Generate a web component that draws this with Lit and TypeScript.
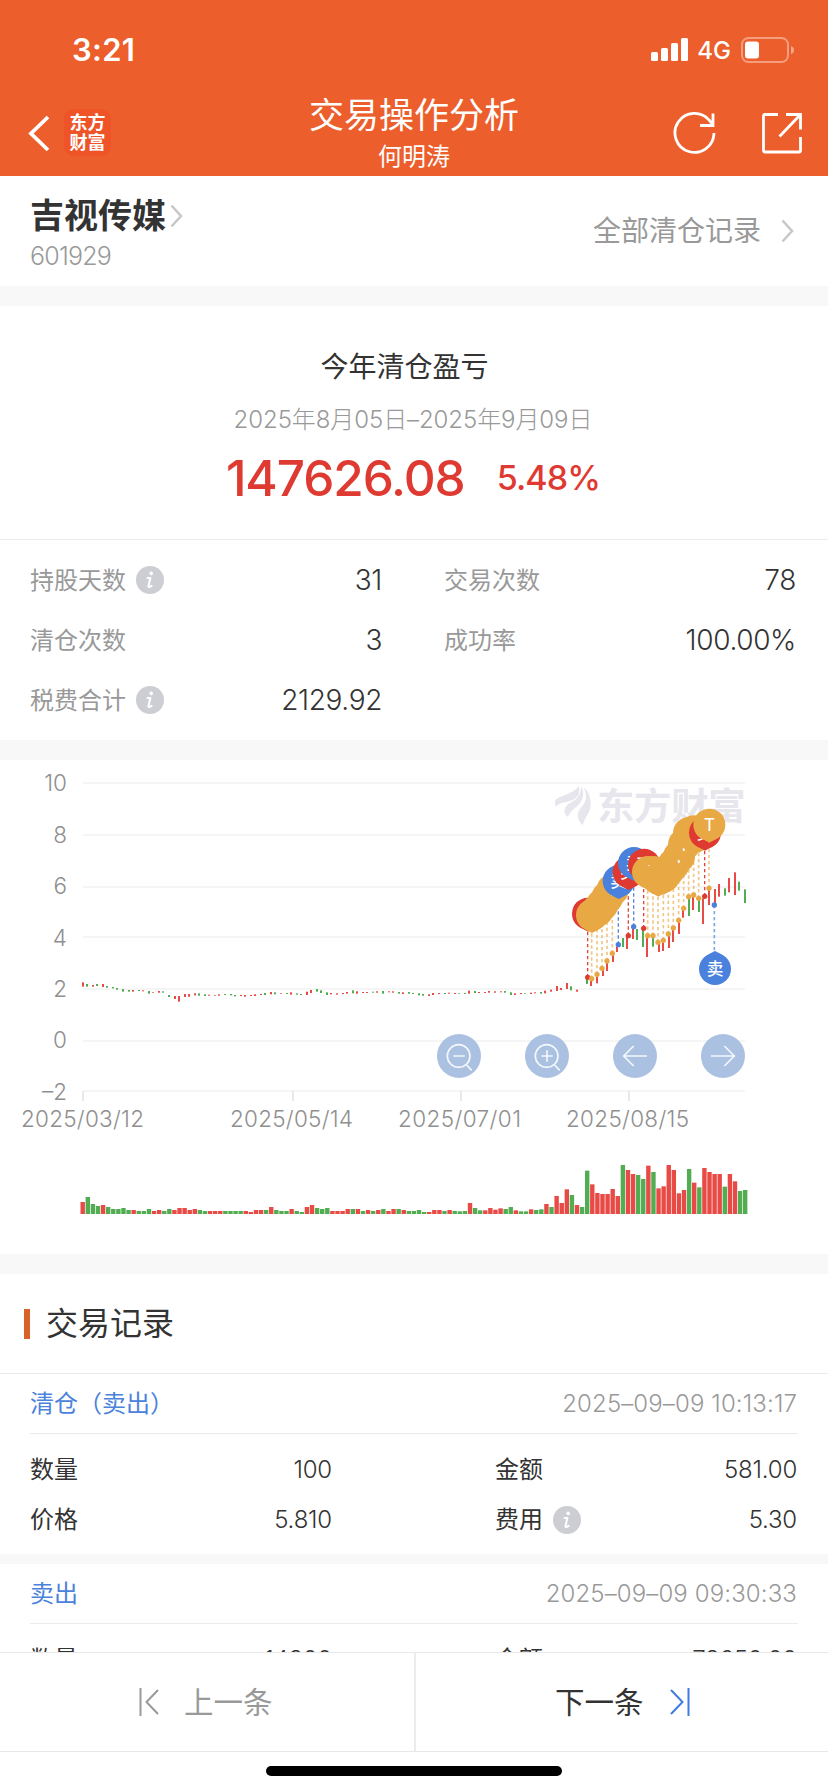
import { LitElement, html, svg, css, nothing } from "lit";
import { customElement, property } from "lit/decorators.js";

const RED = "#e84a45";
const GREEN = "#52ad52";
const PIN: Record<string, { fill: string; text: string }> = {
  B: { fill: "#df3a31", text: "买" },
  S: { fill: "#4a81dc", text: "卖" },
  T: { fill: "#e8a945", text: "T" },
};

// Daily volume: direction followed by height, in thirds of a pixel.
const VOLUMES =
  "r36 g51 g30 g24 r27 g21 g15 g15 g18 g12 r12 g9 g9 g15 r9 r12 g9 g15 r12 r18 r18 r12 r15 g12 g9 r9 r9 r9 g9 g9 g9 g9 r9 r6 r12 r12 g12 r21 g12 g9 g9 r15 g9 g6 r21 r27 g18 g15 g18 r9 r9 r9 r15 g15 r15 g9 r12 g9 r12 g15 r9 r15 g15 r12 g9 g9 g12 g6 r6 r12 r12 g9 r12 g9 g8 g9 r33 g18 g11 r11 r18 r13 r17 g15 g21 r11 g8 g8 r14 g12 g14 r30 g21 r54 r33 r74 g57 r27 g21 g130 r89 r63 r60 r60 r75 r54 g147 r132 r120 g117 g105 r145 g126 r77 r83 r147 r132 r62 r72 g135 r94 g80 r138 r126 r120 r120 g82 r120 r98 g69 g72"
    .split(" ");

// Daily candles: direction, x, top, bottom.
const CANDLES =
  "r249,697,710 g261,702,710 r279,705,710 g291,702,708 r309,702,711 g321,708,713 g339,711,715 g351,714,719 g369,717,725 g387,720,725 r399,720,725 g417,720,723 r429,721,724 g447,723,731 r459,726,728 r477,723,728 g489,724,728 g507,735,741 r525,738,747 r537,738,755 r555,732,741 r567,732,740 r585,730,736 g597,730,737 g615,733,738 r627,734,737 r645,735,737 r657,733,737 g675,732,735 g693,732,736 g705,735,739 r723,735,738 r735,735,740 r753,735,738 r765,733,738 r783,732,735 g795,729,735 r813,726,733 g825,727,733 r843,729,731 g861,729,732 r873,727,734 g891,730,734 g903,732,735 r921,725,735 r933,720,729 g951,717,725 g963,721,729 g981,727,735 r993,729,733 r1011,730,734 r1029,729,732 r1041,726,731 g1059,721,730 r1071,724,731 r1089,726,729 r1101,726,729 g1119,725,728 r1131,724,728 g1149,723,731 r1167,724,727 r1179,724,728 g1197,726,731 r1209,727,732 g1227,726,731 g1239,729,732 g1257,730,736 g1269,732,737 r1287,733,738 r1299,729,735 r1317,729,732 g1335,729,732 r1347,728,731 r1365,729,732 g1377,730,732 g1395,729,732 r1407,722,731 g1425,723,729 r1437,726,729 r1455,726,729 r1467,723,728 r1485,724,728 r1503,724,727 g1515,723,728 g1533,727,735 r1545,730,735 r1563,729,732 g1575,730,732 r1593,728,732 r1605,727,730 g1623,726,731 r1635,722,730 r1653,719,725 r1671,708,723 r1683,714,720 r1701,699,717 g1713,709,721 r1731,719,725 g1761,683,702 r1773,690,708 r1791,678,700 r1809,657,678 r1821,637,663 r1839,613,636 r1851,590,606 g1869,564,591 r1881,560,597 r1899,534,567 g1911,537,570 g1929,537,591 r1941,555,621 g1959,558,590 r1977,579,606 r1989,570,603 r2007,552,594 r2019,535,576 r2037,513,552 r2049,478,503 g2067,440,498 r2079,437,480 g2097,447,486 r2109,445,522 r2127,418,465 r2145,417,466 r2157,402,440 g2175,415,437 r2187,384,427 r2205,367,435 g2217,395,422 g2235,418,459"
    .split(" ").map((s) => ({ up: s[0] === "r", v: s.slice(1).split(",").map(Number) }));

// Trades: kind, x, y of the dot on the price line.
const TRADES =
  "B1763,682 T1775,686 T1791,673 T1806,655 T1821,633 T1837,610 S1855,584 B1885,557 S1901,530 B1931,535 T1943,557 T1959,557 T1974,577 T1990,571 T2005,552 T2020,534 T2036,511 T2051,475 T2066,440 T2081,435 T2096,445 B2114,439 T2127,415"
    .split(" ").map((s) => ({ kind: s[0], v: s.slice(1).split(",").map(Number) }));

@customElement("info-dot")
class InfoDot extends LitElement {
  static styles = css`
    :host { display: block; width: 28px; height: 28px; }
    svg { display: block; }
  `;
  render() {
    return html`<svg width="28" height="28" viewBox="0 0 28 28">
      <circle cx="14" cy="14" r="14" fill="#cdced3" />
      <circle cx="15.2" cy="7.4" r="1.8" fill="#fff" />
      <path d="M11.6 12H14.4L12.4 20.2Q12.3 22 15.6 19.8" fill="none" stroke="#fff" stroke-width="2" stroke-linejoin="round" stroke-linecap="round" />
    </svg>`;
  }
}

@customElement("trade-chart")
class TradeChart extends LitElement {
  static styles = css`
    :host { display: block; height: 494px; }
    svg { display: block; font-family: Inter, "Noto Sans CJK SC", sans-serif; }
    .axis { font-size: 22.5px; font-weight: 300; fill: #8f8f8f; }
    .mark { font-weight: 700; font-size: 112px; fill: #e6e6ec; font-family: "Noto Sans CJK SC", sans-serif; }
    .pin { fill: #fff; text-anchor: middle; font-weight: 500; font-size: 50px; }
    .tee { font-weight: 400; font-size: 53px; }
  `;

  private pin(kind: string, x: number, cy: number, down = true) {
    const p = PIN[kind];
    const s = down ? 1 : -1;
    return svg`
      <circle cx=${x} cy=${cy} r="48" fill=${p.fill} />
      <path d="M${x - 35} ${cy + s * 32}Q${x - 14} ${cy + s * 48} ${x} ${cy + s * 54}Q${x + 14} ${cy + s * 48} ${x + 35} ${cy + s * 32}Z" fill=${p.fill} />
      <text class="pin ${kind === "T" ? "tee" : ""}" x=${x} y=${cy + 18}>${p.text}</text>`;
  }

  private button(x: number, glyph: unknown) {
    return svg`<g transform="translate(${x} 918)" fill="none" stroke="#fff" stroke-width="5" stroke-opacity=".88">
      <circle r="66" fill="#abc1e1" stroke="none" />${glyph}</g>`;
  }

  render() {
    const grid = [99, 255, 411, 561, 717, 873, 1023];
    const yLabels = ["10", "8", "6", "4", "2", "0", "–2"];
    const xLabels: [string, number, number][] = [
      ["2025/03/12", 83, 22], ["2025/05/14", 293, 231], ["2025/07/01", 461, 399], ["2025/08/15", 629, 567],
    ];
    return html`<svg width="828" height="494" viewBox="0 760 828 494">
      <g transform="translate(0 750) scale(.333333)">
        ${grid.map((y) => svg`<rect x="249" y=${y - 3} width="1986" height="6" fill="#f5f5f6" />`)}
        ${xLabels.map(([, x]) => svg`<rect x=${x * 3 - 3} y="1023" width="6" height="30" fill="#e9e9eb" />`)}
        <g fill="#e6e6ec">
          <path d="M1665 152C1668 145 1680 141 1695 135Q1722 127 1736 109C1742 128 1735 141 1718 150C1700 158 1684 155 1666 170Z" />
          <path d="M1743 109C1755 130 1750 150 1735 165C1720 178 1710 185 1704 201Q1689 192 1695 174C1702 160 1717 157 1729 146Q1744 131 1743 109Z" />
          <path d="M1751 112C1775 131 1777 169 1765 190Q1753 208 1748 225Q1729 209 1734 188C1741 172 1754 164 1757 148Q1760 130 1751 112Z" />
        </g>
        <text class="mark" x="1791" y="209" textLength="446">东方财富</text>
        ${CANDLES.map(({ up, v }) => svg`<rect x=${v[0] - 3} y=${v[1]} width="6" height=${v[2] - v[1]} fill=${up ? RED : GREEN} />`)}
        ${TRADES.map(({ kind, v }) => svg`
          <line x1=${v[0]} y1=${v[1]} x2=${v[0]} y2=${v[1] - 140} stroke=${PIN[kind].fill} stroke-width=${kind === "T" ? 5 : 4} stroke-dasharray="10 8" stroke-opacity=${kind === "T" ? 0.65 : 0.95} />`)}
        ${TRADES.map(({ kind, v }) => svg`<circle cx=${v[0]} cy=${v[1]} r="8" fill=${PIN[kind].fill} />`)}
        <line x1="2143" y1="465" x2="2143" y2="610" stroke="#4a81dc" stroke-opacity=".7" stroke-width="5" stroke-dasharray="10 8" />
        <circle cx="2143" cy="465" r="8" fill="#4a81dc" />
        ${TRADES.map(({ kind, v }) => this.pin(kind, v[0] + 1, v[1] - 191))}
        ${this.pin("S", 2145, 657, false)}
        ${this.button(1377, svg`<circle r="34" cx="-1" cy="0" /><path d="M-17 0H17M23 27L38 43" />`)}
        ${this.button(1641, svg`<circle r="34" cx="-1" cy="0" /><path d="M-17 0H17M0 -17V17M23 27L38 43" />`)}
        ${this.button(1905, svg`<path d="M36 0H-34M-4 -30L-34 0L-4 30" />`)}
        ${this.button(2169, svg`<path d="M-36 0H34M4 -30L34 0L4 30" />`)}
      </g>
      <g class="axis">
        ${yLabels.map((t, i) => svg`<text x="67" y=${791.3 + i * 51.4} text-anchor="end">${t}</text>`)}
        ${xLabels.map(([t, , x]) => svg`<text x=${x - 1} y="1127.3" textLength="123">${t}</text>`)}
      </g>
      <g transform="translate(82.7 1214)">
        ${VOLUMES.map((s, i) => svg`<rect x=${i * 5.096 - 2.2} y=${-Number(s.slice(1)) / 3} width="4.4" height=${Number(s.slice(1)) / 3} fill=${s[0] === "r" ? RED : GREEN} />`)}
      </g>
    </svg>`;
  }
}

@customElement("trade-record")
class TradeRecord extends LitElement {
  @property() kind = "";
  @property() time = "";
  @property({ attribute: false }) cells: string[] = [];
  static styles = css`
    :host { display: block; padding: 0 30px; }
    .head { display: flex; justify-content: space-between; align-items: center; height: 59px; border-bottom: 1px solid #ebebeb; }
    .kind { color: #4a82dc; padding-top: 1px; }
    .time { color: #999; font-weight: 300; letter-spacing: 0.12px; padding-right: 1px; }
    .body { display: grid; grid-template-columns: 302px 302px; column-gap: 163px; grid-auto-rows: 50px; padding: 11px 0 9px; }
    .cell { display: flex; align-items: center; color: #333; }
    .value { margin-left: auto; letter-spacing: -0.2px; font-weight: 350; }
    info-dot { margin-left: 10px; }
  `;
  render() {
    const names = ["数量", "金额", "价格", "费用"];
    return html`<div class="head"><span class="kind">${this.kind}</span><span class="time">${this.time}</span></div>
      <div class="body">${names.map((n, i) => html`<div class="cell"><span>${n}</span>${i === 3 ? html`<info-dot></info-dot>` : nothing}<span class="value">${this.cells[i]}</span></div>`)}</div>`;
  }
}

@customElement("app-root")
class AppRoot extends LitElement {
  static styles = css`
    :host { display: flex; flex-direction: column; width: 828px; height: 1792px; overflow: hidden; background: #fff; color: #333;
      font: 400 24px/1 Inter, "Noto Sans CJK SC", sans-serif; }
    * { box-sizing: border-box; }
    svg { display: block; }
    header { flex: none; height: 176px; background: #ec5e2b; color: #fff; }
    .status { display: flex; align-items: center; height: 88px; padding: 11px 33px 0 72px; }
    .clock { font-size: 31px; font-weight: 600; margin-right: auto; letter-spacing: 0.3px; }
    .net { font-weight: 450; font-size: 24px; margin: 2px 10px 0 9px; }
    .nav { display: grid; grid-template-columns: 1fr auto 1fr; height: 88px; }
    .left { display: flex; align-items: center; padding-left: 28px; gap: 13px; }
    .badge { width: 47px; height: 47px; border-radius: 9px; background: #ef5429; font-size: 18px; line-height: 20px; font-weight: 700; text-align: center; padding-top: 4px; margin-top: -1px; }
    .titles { text-align: center; padding-top: 7px; }
    .title { font-size: 35px; line-height: 41px; }
    .sub { font-size: 24px; line-height: 42px; }
    .right { display: flex; justify-content: flex-end; align-items: center; padding-right: 25px; gap: 45px; }
    .stock { flex: none; height: 110px; display: flex; align-items: center; padding: 0 34px 0 30px; }
    .name { display: flex; align-items: center; gap: 4px; font-size: 34px; font-weight: 600; line-height: 50px; padding-top: 1px; }
    .code { font-size: 25px; font-weight: 300; color: #999; line-height: 32px; letter-spacing: -0.8px; margin-top: -1px; }
    .all { margin-left: auto; display: flex; align-items: center; gap: 20px; font-size: 28px; color: #999; }
    .band { flex: none; height: 20px; background: #f8f8f8; }
    .thin { height: 10px; }
    .summary { flex: none; height: 234px; border-bottom: 1px solid #ebebeb; text-align: center; padding-top: 36px; }
    .st { font-size: 28px; line-height: 51px; padding-right: 19px; }
    .range { font-size: 24px; line-height: 54px; color: #999; font-weight: 300; letter-spacing: -0.08px; padding-right: 2px; }
    .profit { display: flex; justify-content: center; align-items: center; gap: 32px; line-height: 62px; color: #df3a31; padding-right: 2px; }
    .money { font-size: 49.5px; letter-spacing: -1.1px; font-weight: 550; }
    .pct { font-size: 34px; letter-spacing: -0.9px; font-weight: 550; }
    .metrics { flex: none; height: 200px; display: grid; grid-template-columns: 352px 352px; column-gap: 62px; grid-auto-rows: 60px; padding: 10px 30px; }
    .metric { display: flex; align-items: center; gap: 10px; color: #999; }
    .metric span { padding-top: 2px; }
    .metric b { margin-left: auto; font-weight: 350; font-size: 28px; color: #333; letter-spacing: -0.35px; }
    .section { flex: none; display: flex; align-items: center; height: 100px; padding-left: 24px; gap: 16px; border-bottom: 1px solid #ebebeb; font-size: 32px; }
    .section::before { content: ""; width: 6px; height: 30px; background: #d9622b; }
    .records { flex: 1; min-height: 0; overflow: hidden; }
    .pager { flex: none; display: flex; height: 100px; border: solid #e8e8e8; border-width: 1px 0; font-size: 29.5px; }
    .pager div { flex: 1; display: flex; align-items: center; justify-content: center; }
    .pager span { padding-top: 1px; }
    .prev { color: #999; gap: 25px; border-right: 2px solid #ececec; padding-right: 2px; }
    .next { gap: 26px; padding-left: 1px; }
    .home { flex: none; height: 40px; padding-top: 14px; }
    .home::before { content: ""; display: block; width: 296px; height: 10px; border-radius: 5px; background: #000; margin: 0 auto; }
  `;

  private chevron() {
    return html`<svg width="13" height="24" viewBox="0 0 13 24"><path d="M1.5 1.5L11 12L1.5 22.5" fill="none" stroke="#c8c8c8" stroke-width="2.6" /></svg>`;
  }

  render() {
    const metrics: [string, string, boolean][] = [
      ["持股天数", "31", true], ["交易次数", "78", false],
      ["清仓次数", "3", false], ["成功率", "100.00%", false],
      ["税费合计", "2129.92", true],
    ];
    return html`
      <header>
        <div class="status">
          <span class="clock">3:21</span>
          <svg width="37" height="23" viewBox="0 0 37 23" fill="#fff"><rect y="14" width="7" height="9" rx="1.5" /><rect x="10" y="10" width="7" height="13" rx="1.5" /><rect x="20" y="5" width="7" height="18" rx="1.5" /><rect x="30" width="7" height="23" rx="1.5" /></svg>
          <span class="net">4G</span>
          <svg width="54" height="26" viewBox="0 0 54 26"><rect x="1" y="1" width="46" height="24" rx="6.5" fill="none" stroke="#fff" stroke-opacity=".4" stroke-width="2" /><rect x="4" y="4.5" width="14" height="17" rx="3" fill="#fff" /><path d="M50 9Q53 10 53 13Q53 16 50 17Z" fill="#fff" fill-opacity=".45" /></svg>
        </div>
        <div class="nav">
          <div class="left">
            <svg width="23" height="38" viewBox="0 0 23 38"><path d="M20 3L3 19.5L20 36" fill="none" stroke="#fff" stroke-width="3.8" /></svg>
            <div class="badge">东方<br />财富</div>
          </div>
          <div class="titles"><div class="title">交易操作分析</div><div class="sub">何明涛</div></div>
          <div class="right">
            <svg width="44" height="44" viewBox="0 0 44 44" fill="none" stroke="#fff" stroke-width="2.8"><path d="M42 22A19.5 19.5 0 1 1 37.5 9.4L41 14M41 2.5V14.5H28" /></svg>
            <svg width="42" height="42" viewBox="0 0 42 42" fill="none" stroke="#fff" stroke-width="2.8"><path d="M17 2.5H4Q2.5 2.5 2.5 4V38.5Q2.5 40 4 40H38Q39.5 40 39.5 38.5V25M25 2.5H39.5V17.5M39.5 2.5L18.5 24.5" /></svg>
          </div>
        </div>
      </header>
      <div class="stock">
        <div><div class="name"><span>吉视传媒</span>${this.chevron()}</div><div class="code">601929</div></div>
        <div class="all"><span>全部清仓记录</span>${this.chevron()}</div>
      </div>
      <div class="band"></div>
      <div class="summary">
        <div class="st">今年清仓盈亏</div>
        <div class="range">2025年8月05日–2025年9月09日</div>
        <div class="profit"><span class="money">147626.08</span><span class="pct">5.48%</span></div>
      </div>
      <div class="metrics">
        ${metrics.map(([n, v, info]) => html`<div class="metric"><span>${n}</span>${info ? html`<info-dot></info-dot>` : nothing}<b>${v}</b></div>`)}
      </div>
      <div class="band"></div>
      <trade-chart></trade-chart>
      <div class="band"></div>
      <div class="section">交易记录</div>
      <div class="records">
        <trade-record kind="清仓（卖出）" time="2025–09–09 10:13:17" .cells=${["100", "581.00", "5.810", "5.30"]}></trade-record>
        <div class="band thin"></div>
        <trade-record kind="卖出" time="2025–09–09 09:30:33" .cells=${["14300", "78650.00", "5.500", "47.20"]}></trade-record>
      </div>
      <div class="pager">
        <div class="prev"><svg width="20" height="30" viewBox="0 0 20 30" fill="none" stroke="#999" stroke-width="2"><path d="M1.5 1V29M19 3L7.5 15L19 27" /></svg><span>上一条</span></div>
        <div class="next"><span>下一条</span><svg width="20" height="30" viewBox="0 0 20 30" fill="none" stroke="#3f7be0" stroke-width="2"><path d="M18.5 1V29M1 3L12.5 15L1 27" /></svg></div>
      </div>
      <div class="home"></div>
    `;
  }
}
